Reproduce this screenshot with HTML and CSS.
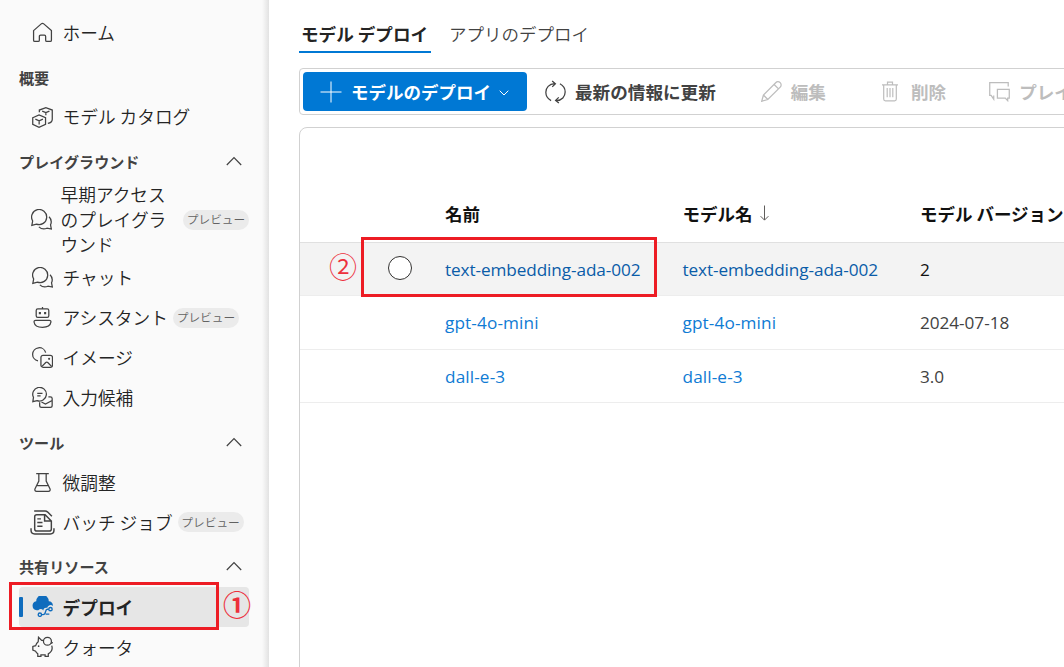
FILE: index.html
```html
<!DOCTYPE html>
<html lang="ja">
<head>
<meta charset="utf-8">
<title>モデル デプロイ</title>
<link rel="stylesheet" href="styles.css">
</head>
<body>
<div class="app">
  <nav class="sidebar">
    <a class="item"><svg class="icon" viewBox="0 0 20 20"><path d="M1.5 8.2 8.8 1.8a1.8 1.8 0 0 1 2.4 0l7.3 6.4v9.1a1.2 1.2 0 0 1-1.2 1.2h-3.1a1.2 1.2 0 0 1-1.2-1.2v-3.6c0-.7-.5-1.2-1.2-1.2H8.2c-.7 0-1.2.5-1.2 1.2v3.6a1.2 1.2 0 0 1-1.2 1.2H2.7a1.2 1.2 0 0 1-1.2-1.2z"/></svg><span>ホーム</span></a>
    <div class="heading first"><span>概要</span></div>
    <a class="item"><svg class="icon" viewBox="0 0 20 20"><path d="m.7 10.2 6-2.7 6.2 2.7v6.4l-6.2 2.7-6-2.7zM3.2 11.6l3.6 1.6 3.6-1.6M6.8 13.2v3.4M7 5V2.9L13.2.7l6.1 2.2v8.700c0 2-1.500 3.500-4.200 4M9.700 4l3.500 1.400L16.600 4M13.200 5.400v2.400"/></svg><span>モデル カタログ</span></a>
    <div class="heading"><span>プレイグラウンド</span><svg class="chevron" viewBox="0 0 16 10"><path d="m.8 9 7.2-7.5L15.2 9"/></svg></div>
    <a class="item tall"><svg class="icon" viewBox="0 0 20 20"><path d="M1.600 11.400A7.200 7.200 0 1 1 5.200 14.400L.8 15.600zM17.200 7.400a7 7 0 0 1 1.400 7.700l.8 4-4.200-.8a7 7 0 0 1-7.700-1.300"/></svg><span class="wrap">早期アクセス<br>のプレイグラ<br>ウンド</span><span class="badge">プレビュー</span></a>
    <a class="item"><svg class="icon" viewBox="0 0 20 20"><path d="M1.600 11.400A7.200 7.200 0 1 1 5.200 14.400L.8 15.600zM17.200 7.400a7 7 0 0 1 1.400 7.700l.8 4-4.200-.8a7 7 0 0 1-7.700-1.300"/></svg><span>チャット</span></a>
    <a class="item"><svg class="icon" viewBox="0 0 20 20"><rect x="4" y="1.800" width="12" height="8" rx="1.500"/><path d="M10 0v2M3.500 12.700h13c1.200 0 1.700.6 1.500 1.800-.5 3.300-3.500 4.900-8 4.900s-7.500-1.600-8-4.900c-.2-1.200.3-1.800 1.500-1.800z"/><path class="solid" d="M6.500 4.800h2v2h-2zM11.500 4.800h2v2h-2z"/></svg><span>アシスタント</span><span class="badge near">プレビュー</span></a>
    <a class="item"><svg class="icon" viewBox="0 0 20 20"><path d="M5.700 13.200A6.300 6.300 0 1 1 13 5.400"/><rect x="8.500" y="8" width="11" height="11.300" rx="2"/><path d="m9.500 18.500 3.600-3.700c.6-.6 1.300-.6 1.900 0l3.600 3.700"/><circle class="solid" cx="16.300" cy="11.300" r="1"/></svg><span>イメージ</span></a>
    <a class="item"><svg class="icon" viewBox="0 0 20 20"><path d="M1.400 9.800A6.500 6.500 0 1 1 4.800 12.900L.8 14zM5 6h5M5 8.500h3.200M7.300 14.500v3c0 1 .7 1.800 1.800 1.800h8.300c1 0 1.800-.8 1.800-1.800V11c0-1-.7-1.700-1.800-1.700h-1.800M9 14.300l3.800 2 6.400-3.500"/></svg><span>入力候補</span></a>
    <div class="heading"><span>ツール</span><svg class="chevron" viewBox="0 0 16 10"><path d="m.8 9 7.2-7.5L15.2 9"/></svg></div>
    <a class="item low"><svg class="icon" viewBox="0 0 20 20"><path d="M4 1.600h12M6.500 1.600v7L2.900 16c-.6 1.300.1 2.400 1.500 2.400h11.200c1.400 0 2.100-1.100 1.500-2.400l-3.600-7.400v-7M5 13h10"/></svg><span>微調整</span></a>
    <a class="item low"><svg class="icon big" viewBox="0 0 24 24"><path d="M6.500 4.500h8l6 6v7.700a2 2 0 0 1-2 2h-12a2 2 0 0 1-2-2V6.500c0-1.100.9-2 2-2zM14 4.500v6h6.500M4 1h10.500c1 0 1.800.4 2.500 1l4 4M1 17.500v2c0 2.300 1.200 3.500 3.500 3.500h15c2.300 0 3.500-1.200 3.500-3.500v-2M7 8.500h3.500M7 12h5M7 15.500h5"/></svg><span>バッチ ジョブ</span><span class="badge near">プレビュー</span></a>
    <div class="heading"><span>共有リソース</span><svg class="chevron" viewBox="0 0 16 10"><path d="m.8 9 7.2-7.5L15.2 9"/></svg></div>
    <a class="item low active"><svg class="icon cloud" viewBox="0 0 20 20"><path class="solid" d="M4.500 13.500A4.300 4.300 0 0 1 4 5 6 6 0 0 1 16 5c2.200.1 3.900 1.700 3.900 3.800v.7a3.300 3.300 0 0 0-5.400 1.700h-1c-1.800 0-2.500 1-2.700 2.500A3.300 3.300 0 0 0 6 13.500z"/><circle cx="7.500" cy="17.800" r="1.600"/><circle cx="17.600" cy="12.500" r="1.600"/><path d="M9.300 17.800h1.200c3.300 0 1.600-5.200 4-5.200H16M13 17.300h3.500"/></svg><span>デプロイ</span></a>
    <a class="item low"><svg class="icon" viewBox="0 0 20 20"><path d="M10.500 4.200H9.200L6.200 1.200l-.3 4.300C4.500 6.600 3.900 7.900 3.500 9.200L.8 10v3.500l2.600 1c.5 1 1.200 1.800 2.100 2.500v2.300h3V18h4v1.300h3V17c2.200-1.300 3.700-3.300 3.700-5.600 0-.8-.2-1.500-.4-2.200"/><circle cx="14.700" cy="5" r="3.800"/><path d="M18 6.900c1 0 1.400-.4 1.400-1.300"/><circle class="solid" cx="6.300" cy="9.700" r=".8"/></svg><span>クォータ</span></a>
  </nav>
  <main class="main">
    <div class="tabs"><a class="tab selected">モデル デプロイ</a><a class="tab">アプリのデプロイ</a></div>
    <div class="toolbar">
      <button class="primary"><svg class="plus" viewBox="0 0 22 22"><path d="M11 .5v21M.5 11h21"/></svg><span>モデルのデプロイ</span><svg class="caret" viewBox="0 0 10 6"><path d="m.7.7 4.300 4.300L9.300.7"/></svg></button>
      <button class="command"><svg class="tool refresh" viewBox="0 0 20 22"><path d="M5.800 19.200C2.500 17.500.8 14.700.8 11.300c0-4.200 3-8 8.500-8.200M6.800.5l3.100 2.700-3 2.900M14.200 3.200c3.300 1.700 5 4.500 5 7.900 0 4.200-3 8-8.500 8.200M13.200 21.500l-3.100-2.500 3-2.900"/></svg><span>最新の情報に更新</span></button>
      <button class="command off edit"><svg class="tool" viewBox="0 0 20 20"><path d="m.7 19.300 1.600-6L14 1.600a2.900 2.900 0 0 1 4.300 4.200L6.500 17.600zM12.500 3.300l4.200 4.200M2.300 13.300l4.200 4.300"/></svg><span>編集</span></button>
      <button class="command off delete"><svg class="tool trash" viewBox="0 0 16 20"><path d="M0 3.300h16M5.500 3V.7h5V3M1.700 3.300v14.200c0 1.300.6 1.800 1.700 1.800h9.200c1.100 0 1.700-.5 1.700-1.800V3.300M5.200 6.500v9.200M8 6.500v9.200M10.800 6.500v9.200"/></svg><span>削除</span></button>
      <button class="command off play"><svg class="tool" viewBox="0 0 20 20"><path d="M4.500 13.800v3.500L2 13.800H.7V1.500h17.600v3.800M8 8h11.300v8.200h-1.500v2.500l-2.300-2.500H8z"/></svg><span>プレイ</span></button>
    </div>
    <section class="card">
      <div class="row head"><span></span><span>名前</span><span class="sort">モデル名<svg class="arrow" viewBox="0 0 9 16"><path d="M4.500.5v14.600M.6 11.200l3.900 3.900 3.900-3.900"/></svg></span><span>モデル バージョン</span></div>
      <div class="row hover"><span class="radio"></span><a>text-embedding-ada-002</a><a>text-embedding-ada-002</a><span>2</span></div>
      <div class="row"><span></span><a class="short">gpt-4o-mini</a><a class="short">gpt-4o-mini</a><span>2024-07-18</span></div>
      <div class="row"><span></span><a class="short">dall-e-3</a><a class="short">dall-e-3</a><span>3.0</span></div>
    </section>
  </main>
  <div class="mark mark-nav"></div><div class="number number-one">①</div>
  <div class="mark mark-row"></div><div class="number number-two">②</div>
</div>
</body>
</html>
```
FILE: styles.css
```css
* { box-sizing: border-box; }
body { margin: 0; overflow: hidden; background: #fff; font-family: "Noto Sans CJK JP", sans-serif; font-size: 17.5px; font-weight: 350; color: #242424; }
svg { flex: none; fill: none; stroke: currentColor; }
.app { position: relative; display: flex; width: 1064px; height: 667px; overflow: hidden; }
.sidebar { width: 269px; flex: none; padding: 13px 20px 0 19px; background: linear-gradient(to right, transparent 262px, #e2e2e2 269px), #fafafa; font-size: 17.7px; white-space: nowrap; }
.item { display: flex; align-items: center; height: 40px; padding-left: 13px; border-radius: 4px; }
.item.tall { height: 76px; padding-left: 12px; }
.item.tall .wrap { margin-left: -1px; }
.item span { line-height: 25px; padding-bottom: 2px; }
.item.low > span:not(.badge) { padding-bottom: 0; }
.icon { width: 21px; height: 21px; margin: 0 10px 1px -.5px; stroke-width: 1.2; color: #424242; }
.icon.big { width: 25px; height: 25px; margin: 0 8px 0 -2.5px; stroke-width: 1.4; }
.icon .solid { fill: currentColor; stroke: none; }
.heading { display: flex; justify-content: space-between; align-items: center; height: 44.5px; padding: 3px 7px 0 0; font-size: 15.1px; font-weight: 700; color: #424242; }
.heading.first { padding-top: 3px; }
.chevron { width: 16px; height: 10px; stroke-width: 1.2; }
.item .badge { display: flex; align-items: center; justify-content: center; width: 66px; height: 20px; margin: 0 0 1px auto; padding: 0 0 1px; border-radius: 10px; background: #ebebeb; color: #616161; font-size: 11.7px; line-height: 18px; }
.item .badge.near { margin-left: 5px; }
.active { position: relative; background: #e6e6e6; font-weight: 700; }
.active::before { content: ""; position: absolute; left: 0; top: 10px; width: 4px; height: 20px; border-radius: 1px; background: #0f6cbd; }
.icon.cloud { color: #0f6cbd; stroke-width: 1.3; }
.main { width: 795px; padding: 18px 0 0 30px; white-space: nowrap; }
.tabs { display: flex; gap: 18px; height: 35px; }
.tab { height: 35px; line-height: 31px; color: #424242; }
.tab.selected { width: 132px; padding-left: 2px; border-bottom: 2px solid #0078d4; font-size: 17.6px; font-weight: 700; color: #242424; }
.toolbar { display: flex; width: 900px; height: 47px; margin-top: 15px; padding: 3px; border: 1px solid #d1d1d1; border-radius: 4px; }
button { display: flex; flex: none; align-items: center; padding: 0; border: 0; background: none; font: inherit; font-weight: 700; color: #424242; line-height: 39px; }
button span { padding-bottom: 1px; }
.primary { width: 224px; height: 39px; padding-left: 17px; border-radius: 4px; background: #0078d4; color: #fff; }
.plus { width: 22px; height: 22px; margin-right: 9px; }
.caret { width: 10px; height: 6px; margin: 3px 0 0 8px; }
.command { height: 39px; margin-left: 18px; font-size: 17.6px; }
.tool { width: 21px; height: 21px; margin-right: 9px; stroke-width: 1.2; }
.refresh { height: 24px; }
.off { color: #bdbdbd; }
.edit { margin-left: 45px; }
.delete { margin-left: 56px; }
.play { margin-left: 43px; }
.trash { width: 16px; margin-right: 13px; }
.card { width: 900px; height: 560px; margin-top: 12px; padding-top: 58px; border: 1px solid #d1d1d1; border-radius: 8px; }
.row { display: grid; grid-template-columns: 145px 237.5px 237.5px 280px; align-items: center; height: 53.3px; padding-top: 1px; border-bottom: 1px solid #ededed; font-family: "Open Sans", sans-serif; font-size: 17.2px; font-weight: 400; letter-spacing: -.05px; color: #424242; }
.row a { color: #0f7bd4; }
.row .short { letter-spacing: .12px; }
.head { height: 57px; padding: 0 0 2px; border-color: #e0e0e0; font-family: "Noto Sans CJK JP", sans-serif; font-size: 17.5px; font-weight: 700; letter-spacing: 0; color: #111; }
.sort { display: flex; align-items: center; gap: 7px; }
.arrow { width: 9px; height: 16px; stroke: #605e5c; }
.hover { background: #f3f3f3; color: #111; }
.hover a { color: #0a5ca8; letter-spacing: -.1px; }
.radio { width: 24px; height: 24px; margin: -4px 0 0 88px; border: 1.5px solid #323130; border-radius: 50%; background: #fff; }
.mark { position: absolute; border: 3px solid #ed1c24; }
.mark-nav { left: 9px; top: 582px; width: 210px; height: 48px; }
.mark-row { left: 361px; top: 237px; width: 296px; height: 60px; }
.number { position: absolute; color: #ed303c; font-size: 28px; line-height: 28px; }
.number-one { left: 223px; top: 590px; font-weight: 700; }
.number-two { left: 329px; top: 252px; }
```
